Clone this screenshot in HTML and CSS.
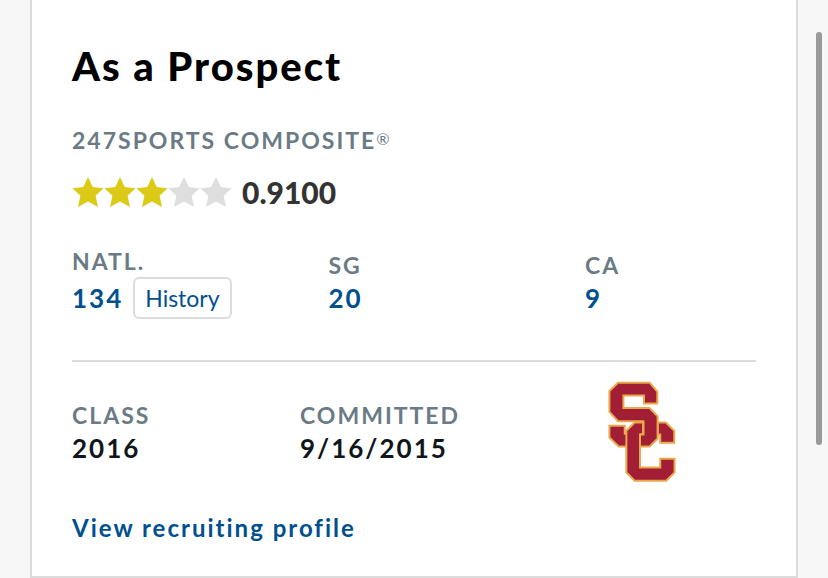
FILE: index.html
```html
<!DOCTYPE html>
<html lang="en">
<head>
<meta charset="utf-8">
<meta name="viewport" content="width=device-width, initial-scale=1">
<title>As a Prospect</title>
<link rel="stylesheet" href="styles.css">
</head>
<body>
<svg class="symbols" aria-hidden="true">
  <symbol id="star" viewBox="0 0 32 32"><path d="M16 1l4.8 10 10.8 1.2-8 7.600 2.400 11.200-10-5.600-10 5.600 2.400-11.200-8-7.600 10.800-1.200z"/></symbol>
</svg>
<main class="card">
  <h1 class="title">As a Prospect</h1>
  <h2 class="label">247SPORTS COMPOSITE<sup class="mark">®</sup></h2>
  <div class="rating">
    <div class="stars" role="img" aria-label="3 out of 5 stars">
      <svg class="star on"><use href="#star"/></svg>
      <svg class="star on"><use href="#star"/></svg>
      <svg class="star on"><use href="#star"/></svg>
      <svg class="star"><use href="#star"/></svg>
      <svg class="star"><use href="#star"/></svg>
    </div>
    <span class="score">0.9100</span>
  </div>
  <dl class="ranks">
    <div>
      <dt class="label">NATL.</dt>
      <dd class="value with-button"><a href="#national">134</a><button class="history" type="button">History</button></dd>
    </div>
    <div>
      <dt class="label">SG</dt>
      <dd class="value"><a href="#position">20</a></dd>
    </div>
    <div>
      <dt class="label">CA</dt>
      <dd class="value"><a href="#state">9</a></dd>
    </div>
  </dl>
  <div class="commitment">
    <dl class="facts">
      <div>
        <dt class="label">CLASS</dt>
        <dd class="value">2016</dd>
      </div>
      <div>
        <dt class="label">COMMITTED</dt>
        <dd class="value">9/16/2015</dd>
      </div>
    </dl>
    <svg class="logo" viewBox="54 34 204 304" role="img" aria-label="USC">
      <path d="M84 39H179L202 66V102H162V78H100V115H178L203 140V207L179 231H86L58 204V169H104V193H160V155H84L58 127V64Z"/>
      <path d="M134 159H160V195H150V294H211V268H254V309L229 334H134L109 309V184Z"/>
      <path d="M204 159H228L253 184V220H211V195H204Z"/>
      <path class="seam" d="M151 193H158V160"/>
    </svg>
  </div>
  <a class="profile" href="#profile">View recruiting profile</a>
</main>
<div class="scrollbar" aria-hidden="true"></div>
</body>
</html>
```
FILE: styles.css
```css
* {
  box-sizing: border-box;
}

body {
  margin: 0;
  background: #f7f7f7;
  color: #0f161c;
  font-family: Lato, "Open Sans", sans-serif;
}

h1,
h2,
dl,
dd {
  margin: 0;
}

a {
  color: #00508f;
  text-decoration: none;
}

.symbols {
  display: none;
}

.card {
  margin: 0 30px;
  padding: 40px 40px 28px;
  background: #fff;
  border: 2px solid #dcdcdc;
  border-top: 0;
}

.title {
  color: #000;
  font-size: 40px;
  font-weight: 900;
  line-height: 52px;
  letter-spacing: 2px;
}

.label {
  color: #6a7b86;
  font-size: 23px;
  font-weight: 700;
  line-height: 32px;
  letter-spacing: 2px;
}

.title + .label {
  margin-top: 32px;
}

.mark {
  font-size: 16px;
  font-weight: 400;
  line-height: 16px;
  vertical-align: 4px;
}

.rating {
  display: flex;
  align-items: center;
  gap: 10px;
  height: 40px;
  margin-top: 16px;
}

.stars {
  display: flex;
}

.star {
  width: 32px;
  height: 32px;
  fill: #dedede;
}

.star.on {
  fill: #dbca18;
}

.score {
  color: #333;
  font-size: 30px;
  font-weight: 900;
}

.ranks {
  display: grid;
  grid-template-columns: 3fr 3fr 2fr;
  align-items: center;
  margin-top: 33px;
  padding-bottom: 41px;
  border-bottom: 2px solid #dcdcdc;
}

.value {
  font-size: 26px;
  font-weight: 700;
  line-height: 34px;
  letter-spacing: 2px;
}

.with-button {
  display: flex;
  align-items: center;
  gap: 10px;
  height: 42px;
}

.history {
  height: 42px;
  padding: 0 10px;
  background: #fff;
  border: 2px solid #dcdcdc;
  border-radius: 6px;
  color: #00508f;
  font: 400 23px/36px Lato, sans-serif;
}

.commitment {
  display: grid;
  grid-template-columns: 2fr 1fr;
  align-items: center;
  padding: 19px 0 26px;
}

.facts {
  display: grid;
  grid-template-columns: 1fr 1fr;
}

.logo {
  width: 68px;
  height: 101px;
  justify-self: center;
  fill: #a11e34;
  stroke: #e9a84c;
  stroke-width: 6;
}

.logo .seam {
  fill: none;
  stroke-width: 4;
}

.profile {
  display: block;
  font-size: 24px;
  font-weight: 700;
  line-height: 40px;
  letter-spacing: 2px;
}

.scrollbar {
  position: absolute;
  top: 32px;
  right: 6px;
  width: 6px;
  height: 413px;
  border-radius: 3px;
  background: #999;
}
```
